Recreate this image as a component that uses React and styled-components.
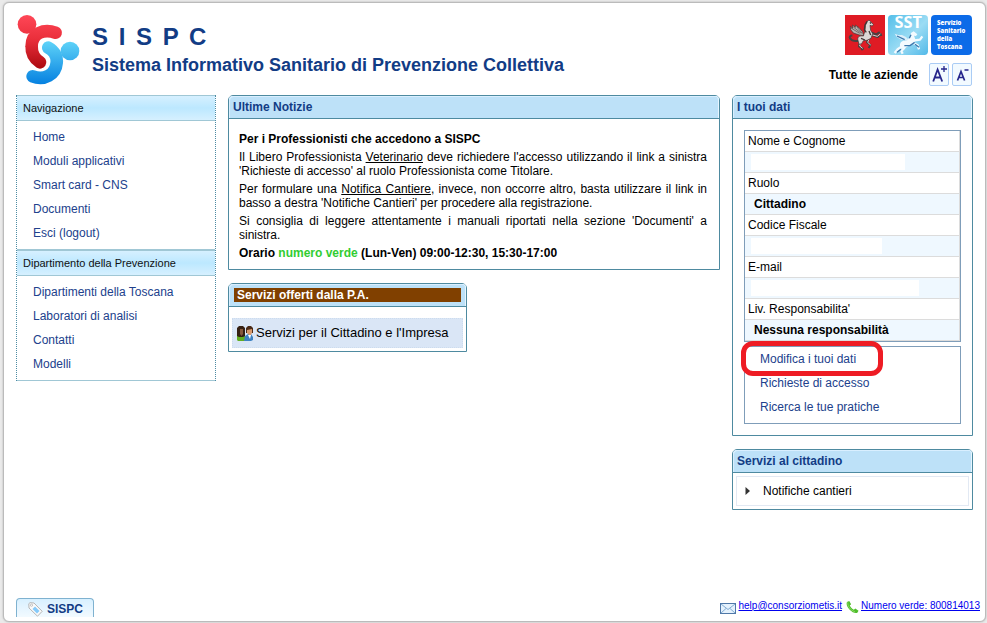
import React from 'react';
import styled, { createGlobalStyle, css, ThemeProvider } from 'styled-components';

const theme = {
  colors: {
    page: '#eaeaea',
    navy: '#123c85',
    link: '#21418c',
    teal: '#4e8aa0',
    edge: '#7f9db9',
    head: '#bde1f8',
    tint: '#eff8ff',
    line: '#dcdcdc',
    brown: '#804000',
  },
  font: '"Liberation Sans", Arial, Helvetica, sans-serif',
};

const GlobalStyle = createGlobalStyle`
  * {
    box-sizing: border-box;
    margin: 0;
    padding: 0;
  }

  body {
    background: ${theme.colors.page};
    color: #000;
    font-family: ${theme.font};
    font-size: 12px;
    line-height: 14px;
  }

  ul {
    list-style: none;
  }
`;

const Page = styled.div`
  display: flex;
  flex-direction: column;
  min-height: calc(100vh - 3px);
  margin: 2px 1px 1px 3px;
  padding: 12px 12px 4px;
  background: #fff;
  border: 1px solid #bbb;
  border-radius: 6px;
  box-shadow: 0 0 2px #aaa;
`;

const Header = styled.header`
  display: flex;
  justify-content: space-between;
  height: 80px;
`;

const Brand = styled.div`
  display: flex;
  gap: 12px;
`;

const Titles = styled.div`
  padding-top: 7px;
  color: ${props => props.theme.colors.navy};
`;

const Title = styled.h1`
  font-size: 24px;
  line-height: 30px;
  letter-spacing: 2px;
`;

const Subtitle = styled.h2`
  font-size: 18px;
  line-height: 26px;
`;

const Tools = styled.div`
  display: flex;
  flex-direction: column;
  align-items: flex-end;
  gap: 8px;
  padding-right: 1px;
`;

const ToolRow = styled.div`
  display: flex;
  align-items: center;
  gap: 3px;
`;

const Scope = styled.strong`
  margin-right: 8px;
`;

const SizeButton = styled.button`
  display: flex;
  align-items: center;
  justify-content: center;
  width: 20px;
  height: 23px;
  background: #f2faff;
  border: 1px solid #aaccf5;
  border-radius: 2px;
`;

const Main = styled.main`
  display: grid;
  grid-template-columns: 200px 1fr 241px;
  gap: 12px;
  align-items: start;
`;

const Nav = styled.nav`
  border: dotted #4d8ba3;
  border-width: 0 1px;
`;

const NavTitle = styled.h3`
  padding-left: 6px;
  height: 26px;
  border: solid #a0c7d5;
  border-width: 1px 0;
  background: linear-gradient(#d6f0ff, #bce8ff 50%, #d6f0ff);
  color: #111;
  font-size: 11px;
  font-weight: normal;
  line-height: 24px;
`;

const LinkList = styled.ul`
  padding: ${props => (props.$boxed ? '0 0 4px 15px' : '4px 0 4px 16px')};
  border: 0 solid #a0c7d5;
  border-bottom-width: 1px;
  line-height: 24px;

  ${props =>
    props.$boxed &&
    css`
      margin-top: 4px;
      border: 1px solid ${props.theme.colors.edge};
    `}
`;

const Item = styled.li`
  position: relative;
`;

const NavLink = styled.a`
  color: ${props => props.theme.colors.link};
  text-decoration: none;
`;

const Highlight = styled.span`
  position: absolute;
  top: -6px;
  left: -19px;
  width: 142px;
  height: 35px;
  border: 5px solid #ee1c24;
  border-radius: 12px;
  pointer-events: none;
`;

const Column = styled.div`
  display: flex;
  flex-direction: column;
  gap: 13px;
`;

const Half = styled.div`
  display: grid;
  grid-template-columns: 1fr 1fr;
  gap: 14px;
`;

const Panel = styled.section`
  border: 1px solid ${props => props.theme.colors.teal};
  border-radius: 5px 5px 0 0;
`;

const PanelTitle = styled.h3`
  height: 23px;
  padding: 4px;
  border-bottom: 1px solid ${props => props.theme.colors.teal};
  border-radius: 4px 4px 0 0;
  background: ${props => props.theme.colors.head};
  box-shadow: inset 1px 1px #d9efff, inset -1px 0 #e6f5ff;
  color: ${props => props.theme.colors.navy};
  font-size: 12px;
  line-height: 14px;
`;

const Banner = styled.span`
  display: block;
  margin: 0 1px;
  padding-left: 3px;
  background: ${props => props.theme.colors.brown};
  color: #fff;
`;

const News = styled.div`
  display: flex;
  flex-direction: column;
  gap: 4px;
  padding: 13px 12px 9px 10px;
  text-align: justify;
`;

const Phone = styled.span`
  color: #32cd32;
`;

const ServiceBody = styled.div`
  padding: ${props => (props.$spaced ? '11px 3px 3px' : '3px')};
`;

const Service = styled.a`
  display: flex;
  align-items: center;
  gap: ${props => (props.$plain ? '13px' : '3px')};
  height: 30px;
  padding-left: ${props => (props.$plain ? '8px' : '4px')};
  border: 1px ${props => (props.$plain ? 'solid #e2e9f3' : 'dotted #cddcee')};
  background: ${props => (props.$plain ? '#fff' : '#dae6f6')};
  color: #000;
  font-size: ${props => (props.$plain ? '12px' : '13px')};
  text-decoration: none;
`;

const Profile = styled.div`
  padding: 11px;
`;

const DataTable = styled.table`
  width: 100%;
  border: 1px solid ${props => props.theme.colors.edge};
  border-collapse: separate;
  border-spacing: 0;
`;

const Label = styled.th`
  height: 21px;
  padding-left: 3px;
  border: solid ${props => props.theme.colors.line};
  border-width: 0 1px 1px 0;
  font-weight: normal;
  text-align: left;
`;

const Value = styled.td`
  height: 21px;
  padding-left: ${props => (props.$blank ? '6px' : '9px')};
  border: solid ${props => props.theme.colors.line};
  border-width: 0 1px 1px 0;
  background: ${props => props.theme.colors.tint};
  font-weight: bold;
`;

const Blank = styled.span`
  display: block;
  width: ${props => props.$width}px;
  height: 16px;
  background: #fff;
`;

const Footer = styled.footer`
  display: flex;
  align-items: flex-end;
  justify-content: space-between;
  margin-top: auto;
  margin-right: -7px;
`;

const Tab = styled.a`
  display: flex;
  align-items: center;
  gap: 4px;
  height: 19px;
  padding: 2px 10px 0 11px;
  border: 1px solid #7fb2d0;
  border-bottom: 0;
  border-radius: 4px 4px 0 0;
  background: linear-gradient(#d8f0ff, #f2faff);
  color: ${props => props.theme.colors.navy};
  font-weight: bold;
  text-decoration: none;
`;

const Contacts = styled.div`
  display: flex;
  align-items: center;
  gap: 2px;
  padding-bottom: 4px;

  svg {
    align-self: flex-end;
    margin-bottom: -1px;
  }
`;

const ContactLink = styled.a`
  color: #00e;
  font-size: 10px;

  & + svg {
    margin-left: 2px;
  }
`;

const Logo = () => (
  <svg width="64" height="70" viewBox="48 45 192 210" aria-hidden="true">
    <defs>
      <linearGradient id="red" gradientUnits="userSpaceOnUse" x1="0" y1="45" x2="0" y2="205">
        <stop offset="0" stopColor="#ff4757" />
        <stop offset="0.45" stopColor="#ea2f3b" />
        <stop offset="1" stopColor="#ad0a10" />
      </linearGradient>
      <linearGradient id="blue" gradientUnits="userSpaceOnUse" x1="0" y1="124" x2="0" y2="254">
        <stop offset="0" stopColor="#5fd3f8" />
        <stop offset="1" stopColor="#0480e0" />
      </linearGradient>
    </defs>
    <circle cx="81" cy="73" r="28" fill="url(#red)" />
    <circle cx="210" cy="153" r="28" fill="url(#blue)" />
    <path d="M167 98C132 86 95 98 95 139C94 160 105 177 120 187" fill="none" stroke="url(#red)" strokeWidth="38" strokeLinecap="round" />
    <path d="M145 143C163 153 172 170 170 188C167 224 132 243 98 229" fill="none" stroke="url(#blue)" strokeWidth="38" strokeLinecap="round" />
  </svg>
);

const Pegasus = () => (
  <svg width="40" height="40" viewBox="0 0 120 120" aria-label="Regione Toscana">
    <rect width="120" height="120" fill="#df1b24" />
    {/* tail and legs */}
    <path d="M40 77C29 79 20 77 15 70C12 66 16 61 22 62M80 60L98 66L107 57L109 63M80 53L94 58L104 51M72 72L66 82L76 90L71 99M45 82L42 94L54 101L49 105" fill="none" stroke="#4b4040" strokeWidth="6" strokeLinejoin="round" />
    <path d="M79 59L97 64L106 57M72 73L68 82L77 90M46 82L44 93L53 100" fill="none" stroke="#d8d2d0" strokeWidth="3" />
    {/* body, neck and head */}
    <path d="M39 76C36 67 43 61 55 63L60 48L61 31L67 19L72 15L76 19L85 28L82 33L75 31L77 46L83 56L78 70L66 76L55 77L50 86L42 88Z" fill="#dcd8d6" stroke="#3c3232" strokeWidth="2" />
    <path d="M66 19L60 30L58 45L64 52M48 70L60 75M72 48L77 60M75 22L78 26" fill="none" stroke="#3f3636" strokeWidth="4" />
    {/* wing */}
    <path d="M56 62L43 60L25 54L17 44L16 34L23 40L22 30L31 37L31 30L42 38L53 50Z" fill="#b9b2b0" stroke="#3c3232" strokeWidth="2" />
    <path d="M18 39L44 55M25 36L49 55M35 35L52 55" stroke="#514747" strokeWidth="2" />
  </svg>
);

const Sst = () => (
  <svg width="40" height="40" viewBox="0 0 120 120" overflow="visible" aria-label="SST">
    <defs>
      <linearGradient id="sky" x2="1" y2="1">
        <stop offset="0" stopColor="#55bfe9" />
        <stop offset="0.55" stopColor="#9bdcf4" />
        <stop offset="1" stopColor="#52b9e8" />
      </linearGradient>
    </defs>
    <rect width="120" height="120" rx="11" fill="url(#sky)" />
    <text x="61" y="38" textAnchor="middle" fill="#fff" fontSize="49" fontWeight="bold" fontFamily="Open Sans, sans-serif">SST</text>
    <path d="M79 76L96 74L103 64M76 84L89 91L93 103M44 93L29 103L20 114M50 98L40 108L44 116" fill="none" stroke="#f4fbff" strokeWidth="7" strokeLinejoin="round" />
    <path d="M36 92C35 82 42 76 54 77L66 67L69 54L77 49L88 58L84 63L78 62L83 76L77 87L62 92L52 99L40 101Z" fill="#f4fbff" />
    <path d="M55 77L40 74L26 66L20 56L31 60L42 60L54 66L62 74Z" fill="#dceffb" />
    <path d="M27 63L50 74M49 92L66 92L80 82M39 103L27 112M69 59L64 70M81 88L93 97" fill="none" stroke="#3c78ad" strokeWidth="4" />
  </svg>
);

const Toscana = () => (
  <svg width="41" height="40" viewBox="0 0 41 40" aria-label="Servizio Sanitario della Toscana">
    <rect width="41" height="40" rx="4" fill="#0c6be8" />
    <g fill="#fff" fontSize="6" fontWeight="800" fontFamily="Open Sans, sans-serif">
      <text x="6" y="10">Servizio</text>
      <text x="6" y="18">Sanitario</text>
      <text x="6" y="26">della</text>
      <text x="6" y="34">Toscana</text>
    </g>
  </svg>
);

const LetterSize = ({ up }) => (
  <svg width="18" height="21" viewBox="0 0 18 21" fill="none" stroke="#26268c" aria-hidden="true">
    {up ? (
      <>
        <path d="M3.2 17.5L7.6 5.5L12.2 17.5M4.8 13.5H10.8" strokeWidth="1.8" />
        <path d="M14 2V8M11 5H17" strokeWidth="1.3" />
      </>
    ) : (
      <>
        <path d="M4.5 16.5L8 7.5L11.6 16.5M5.5 13.5H10.5" strokeWidth="1.7" />
        <path d="M11.5 6H15.5" strokeWidth="1.5" />
      </>
    )}
  </svg>
);

const People = () => (
  <svg width="16" height="16" viewBox="0 0 16 16" aria-hidden="true">
    <path d="M0 15V11L3 9H6L9 12V16H1Z" fill="#62ad22" />
    <path d="M0 11V3L2 1H6L8 3V11L6 12H2Z" fill="#352013" />
    <path d="M3 4H6V9L4.5 11L3 9Z" fill="#86583c" />
    <path d="M7 16L8 11L11 9H14L16 12V15L14 16Z" fill="#3d82c2" />
    <path d="M9 3L11 1H14L16 3V8H9Z" fill="#4b2b18" />
    <path d="M10 5L15 4V8L13 11L10 8Z" fill="#d99a6c" />
    <path d="M11 10L13 14L14 10" fill="#fff" />
  </svg>
);

const Arrow = () => (
  <svg width="5" height="8" viewBox="0 0 5 8" aria-hidden="true">
    <path d="M0.5 0L5 4L0.5 8Z" fill="#333" />
  </svg>
);

const Tag = () => (
  <svg width="15" height="15" viewBox="0 0 15 15" aria-hidden="true">
    <path d="M0.8 1.7L2 0.7L6 1L14.2 9.3L9.5 14.2L1 6Z" fill="#fafafa" stroke="#b5b5b5" />
    <path d="M7 4.5L11.5 9L9 11.5L4.5 7Z" fill="#85cafa" />
    <circle cx="3.5" cy="3.2" r="1.1" fill="#fff" stroke="#aaa" strokeWidth="0.7" />
  </svg>
);

const Envelope = () => (
  <svg width="16" height="11" viewBox="0 0 16 11" aria-hidden="true">
    <rect x="0.5" y="0.5" width="15" height="10" fill="#e5f2fd" stroke="#4f78a8" />
    <path d="M1 1L8 6.5L15 1M1 10L6 5.5M15 10L10 5.5" fill="none" stroke="#83acd3" />
  </svg>
);

const Handset = () => (
  <svg width="13" height="14" viewBox="0 0 14 14" aria-hidden="true">
    <path d="M1 1.5L3.5 0.5L5.5 4L4 5.5C5 7.5 6.5 9 8.5 10L10 8.7L13.5 11L12.2 13.3C10 14.2 6.5 12.7 4 10C1.2 7.2 0 3.8 1 1.5Z" fill="#4fbd2b" />
    <path d="M2 2C1.5 6 4.5 10.5 9.5 12" fill="none" stroke="#91df66" />
  </svg>
);

const menus = [
  {
    title: 'Navigazione',
    links: ['Home', 'Moduli applicativi', 'Smart card - CNS', 'Documenti', 'Esci (logout)'],
  },
  {
    title: 'Dipartimento della Prevenzione',
    links: ['Dipartimenti della Toscana', 'Laboratori di analisi', 'Contatti', 'Modelli'],
  },
];

const profile = [
  { label: 'Nome e Cognome', blank: 154 },
  { label: 'Ruolo', value: 'Cittadino' },
  { label: 'Codice Fiscale', blank: 131 },
  { label: 'E-mail', blank: 168 },
  { label: "Liv. Responsabilita'", value: 'Nessuna responsabilità' },
];

export default () => (
  <ThemeProvider theme={theme}>
    <>
      <GlobalStyle />
      <Page>
        <Header>
          <Brand>
            <Logo />
            <Titles>
              <Title>S I S P C</Title>
              <Subtitle>Sistema Informativo Sanitario di Prevenzione Collettiva</Subtitle>
            </Titles>
          </Brand>
          <Tools>
            <ToolRow>
              <Pegasus />
              <Sst />
              <Toscana />
            </ToolRow>
            <ToolRow>
              <Scope>Tutte le aziende</Scope>
              <SizeButton type="button" aria-label="Ingrandisci il testo">
                <LetterSize up />
              </SizeButton>
              <SizeButton type="button" aria-label="Riduci il testo">
                <LetterSize />
              </SizeButton>
            </ToolRow>
          </Tools>
        </Header>

        <Main>
          <Nav>
            {menus.map(({ title, links }) => (
              <React.Fragment key={title}>
                <NavTitle>{title}</NavTitle>
                <LinkList>
                  {links.map(link => (
                    <Item key={link}>
                      <NavLink href="#">{link}</NavLink>
                    </Item>
                  ))}
                </LinkList>
              </React.Fragment>
            ))}
          </Nav>

          <Column>
            <Panel>
              <PanelTitle>Ultime Notizie</PanelTitle>
              <News>
                <p><strong>Per i Professionisti che accedono a SISPC</strong></p>
                <p>
                  Il Libero Professionista <u>Veterinario</u> deve richiedere l'accesso utilizzando
                  il link a sinistra 'Richieste di accesso' al ruolo Professionista come Titolare.
                </p>
                <p>
                  Per formulare una <u>Notifica Cantiere</u>, invece, non occorre altro, basta
                  utilizzare il link in basso a destra 'Notifiche Cantieri' per procedere alla
                  registrazione.
                </p>
                <p>
                  Si consiglia di leggere attentamente i manuali riportati nella sezione
                  'Documenti' a sinistra.
                </p>
                <p>
                  <strong>
                    Orario <Phone>numero verde</Phone> (Lun-Ven) 09:00-12:30, 15:30-17:00
                  </strong>
                </p>
              </News>
            </Panel>
            <Half>
              <Panel>
                <PanelTitle>
                  <Banner>Servizi offerti dalla P.A.</Banner>
                </PanelTitle>
                <ServiceBody $spaced>
                  <Service href="#">
                    <People />
                    Servizi per il Cittadino e l'Impresa
                  </Service>
                </ServiceBody>
              </Panel>
            </Half>
          </Column>

          <Column>
            <Panel>
              <PanelTitle>I tuoi dati</PanelTitle>
              <Profile>
                <DataTable>
                  <tbody>
                    {profile.map(({ label, value, blank }) => (
                      <React.Fragment key={label}>
                        <tr>
                          <Label>{label}</Label>
                        </tr>
                        <tr>
                          <Value $blank={!!blank}>{value || <Blank $width={blank} />}</Value>
                        </tr>
                      </React.Fragment>
                    ))}
                  </tbody>
                </DataTable>
                <LinkList $boxed>
                  <Item>
                    <NavLink href="#">Modifica i tuoi dati</NavLink>
                    <Highlight />
                  </Item>
                  <Item>
                    <NavLink href="#">Richieste di accesso</NavLink>
                  </Item>
                  <Item>
                    <NavLink href="#">Ricerca le tue pratiche</NavLink>
                  </Item>
                </LinkList>
              </Profile>
            </Panel>
            <Panel>
              <PanelTitle>Servizi al cittadino</PanelTitle>
              <ServiceBody>
                <Service href="#" $plain>
                  <Arrow />
                  Notifiche cantieri
                </Service>
              </ServiceBody>
            </Panel>
          </Column>
        </Main>

        <Footer>
          <Tab href="#">
            <Tag />
            SISPC
          </Tab>
          <Contacts>
            <Envelope />
            <ContactLink href="mailto:help@consorziometis.it">help@consorziometis.it</ContactLink>
            <Handset />
            <ContactLink href="tel:800814013">Numero verde: 800814013</ContactLink>
          </Contacts>
        </Footer>
      </Page>
    </>
  </ThemeProvider>
);
